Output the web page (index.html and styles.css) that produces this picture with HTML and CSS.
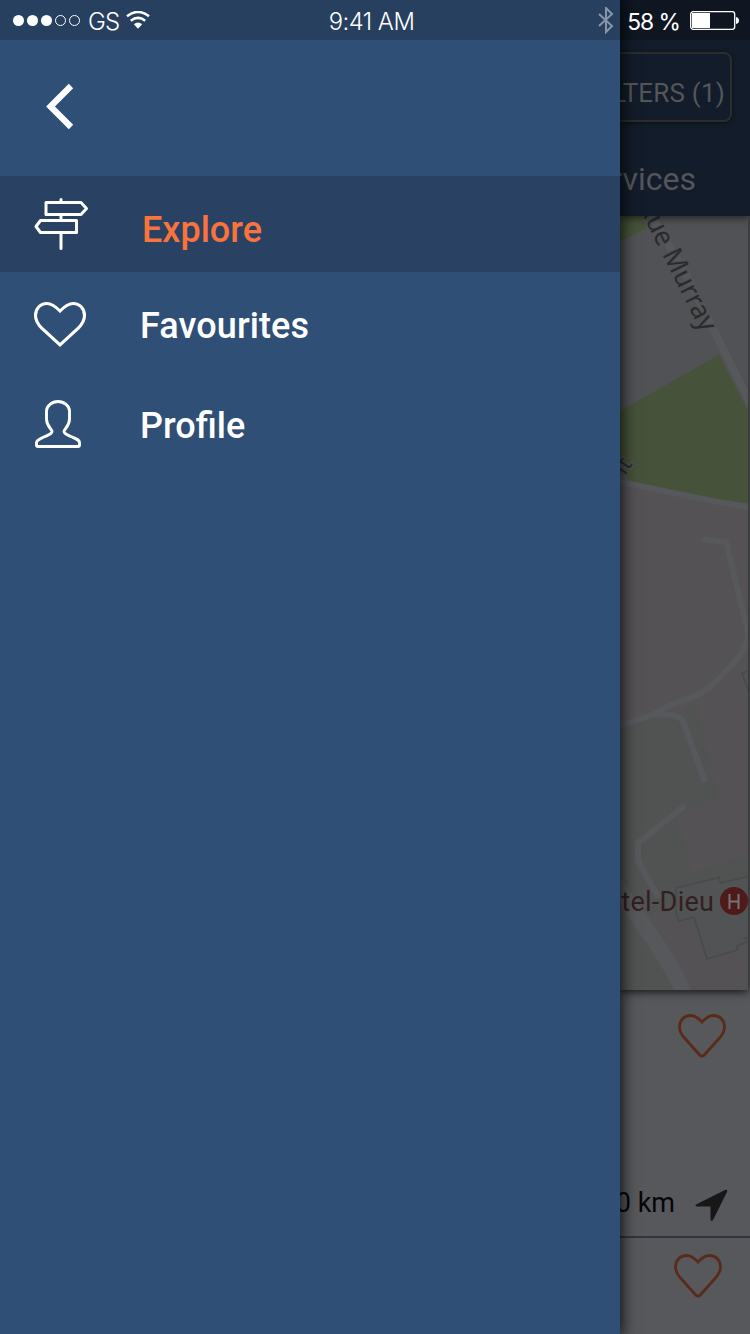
FILE: index.html
```html
<!DOCTYPE html>
<html lang="en">
<head>
<meta charset="utf-8">
<title>Explore</title>
<link rel="stylesheet" href="styles.css">
</head>
<body>
<div class="screen">
  <nav class="drawer">
    <div class="drawer-top">
      <svg class="back" width="32" height="48" viewBox="44 82 32 48"><path d="M71 86 50.500 106.500 71 127" fill="none" stroke="#fff" stroke-width="6.200"/></svg>
    </div>
    <a class="item active">
      <svg class="icon" width="60" height="60" viewBox="30 195 60 60"><g fill="none" stroke="#fff" stroke-width="3" stroke-linejoin="round" stroke-linecap="round"><path d="M61 199.500V202M61 215v5M61 233v15.500M46 202.500h35l5.500 6-5.500 6H46zM76.500 220.500h-36l-4.500 6 4.500 6h36z"/></g></svg>
      <span>Explore</span>
    </a>
    <a class="item favourites">
      <svg class="icon" width="60" height="60" viewBox="30 295 60 60"><path d="M60 311C56.500 307.500 52.500 303.500 47 303.500c-7 0-11.500 5.500-11.500 12 0 5 2.200 8.500 6 12.500L60 345l18.500-17c3.800-4 6-7.500 6-12.500 0-6.500-4.500-12-11.500-12-5.500 0-9.500 4-13 7.500z" fill="none" stroke="#fff" stroke-width="3.100"/></svg>
      <span>Favourites</span>
    </a>
    <a class="item profile">
      <svg class="icon" width="60" height="60" viewBox="30 395 60 60"><path d="M52 431.500c0-2.500-5.500-5-5.500-12.500V411c0-5 5.500-9.500 11.500-9.500s11.500 4.500 11.500 9.500v8c0 7.500-5.500 10-5.500 12.500 0 2.300 3 3 7 5 5.500 2.500 8.500 3.500 8.500 6v2.500q0 1.500-1.500 1.500H38q-1.500 0-1.500-1.500v-2.500c0-2.500 3.500-3.500 8.500-6 4-2 7-2.700 7-5z" fill="none" stroke="#fff" stroke-width="2.900" stroke-linejoin="round"/></svg>
      <span>Profile</span>
    </a>
  </nav>

  <main class="page">
    <header class="header">
      <div class="filters"><span>FILTERS (1)</span></div>
      <div class="tab"><span>Services</span></div>
    </header>
    <div class="map">
      <svg width="128" height="774" viewBox="620 216 128 774">
        <rect x="620" y="216" width="128" height="774" fill="#515255"/>
        <path d="M620 216h32l-6 13-26 12z" fill="#46523a"/>
        <path d="M620 411 719 355 748 411V503Q710 500 631 482L620 466z" fill="#46523a"/>
        <path d="M620 484 748 507V990H620z" fill="#555256"/>
        <path d="M620 725 680 713 696 700 718 797 678 816 692 872 748 855V962L714 990H620z" fill="#515353"/>
        <path d="M650 915 672 902 681 921 699 918 708 958 748 940V968L712 990H694z" fill="#555256"/>
        <path d="M676 888 719 877.500 720.500 883 750 876V937l-5 1 2 4-10 4v4l-30 9-13-42-15 4-3-9z" fill="#515355" stroke="#484a4d" stroke-width="1.500"/>
        <path d="M750 671l-8 2 6 17" fill="none" stroke="#484a4d" stroke-width="1.500"/>
        <g fill="none" stroke="#56585c" stroke-width="6" stroke-linecap="round" stroke-linejoin="round">
          <path d="M652 216 690 282 750 403" stroke-width="8"/>
          <path d="M618 482C650 487 710 502 750 507"/>
          <path d="M705 539.500 726 542 748 632C748 650 738 658 716 682 697 700 680 699 663 709L653 715 618 726M653 715C665 714 678 714 683 721L704 779"/>
          <path d="M683 807 638 843V861L657 895"/>
          <path d="M616 886 653 938Q672 967 684 992" stroke-width="16"/>
        </g>
        <g class="map-label">
          <text transform="translate(638 206) rotate(63.500)" textLength="142" lengthAdjust="spacingAndGlyphs">Rue Murray</text>
          <text transform="translate(633 464) rotate(-55)" text-anchor="end" class="small-label">lt</text>
        </g>
        <text x="714" y="910.500" text-anchor="end" textLength="128" class="place">Hôtel-Dieu</text>
        <circle cx="734" cy="901" r="14" fill="#4e1b1a"/>
        <path d="M729.500 894v15M738.500 894v15M729.500 901.500h9" stroke="#777477" stroke-width="2" fill="none"/>
      </svg>
    </div>
    <section class="card">
      <svg class="heart" width="52" height="48" viewBox="0 0 52 48"><path d="M26 10C23 7 20 3.500 14.500 3.500 8 3.500 3.500 8.500 3.500 15c0 4.500 1.800 7.500 5 11L23.800 43q2.200 2.400 4.400 0L43.500 26c3.200-3.500 5-6.500 5-11 0-6.500-4.500-11.500-11-11.500C32 3.500 29 7 26 10z" fill="none" stroke="#5a2a1b" stroke-width="2.800"/></svg>
      <div class="distance"><span>0 km</span><svg width="34" height="34" viewBox="0 0 34 34"><path d="M1 15.500 30.500.800Q33 .500 32 3L18 31q-1.800 2-2.500-.5V17.500H2Q-.500 16.500 1 15.500z" fill="#171717"/></svg></div>
    </section>
    <section class="card second">
      <svg class="heart" width="52" height="48" viewBox="0 0 52 48"><path d="M26 10C23 7 20 3.500 14.500 3.500 8 3.500 3.500 8.500 3.500 15c0 4.500 1.800 7.500 5 11L23.800 43q2.200 2.400 4.400 0L43.500 26c3.200-3.500 5-6.500 5-11 0-6.500-4.500-11.500-11-11.500C32 3.500 29 7 26 10z" fill="none" stroke="#5a2a1b" stroke-width="2.800"/></svg>
    </section>
  </main>

  <div class="status">
    <div class="status-left">
      <svg width="68" height="14" viewBox="0 0 68 14"><g fill="#fff"><circle cx="5.500" cy="6.500" r="5.500"/><circle cx="19.500" cy="6.500" r="5.500"/><circle cx="33.500" cy="6.500" r="5.500"/></g><g fill="none" stroke="#fff"><circle cx="47.500" cy="6.500" r="5"/><circle cx="61.500" cy="6.500" r="5"/></g></svg>
      <span class="carrier">GS</span>
      <svg width="24" height="20" viewBox="0 0 24 20"><g fill="none" stroke="#fff" stroke-width="2.600"><path d="M1 5.300Q12-3.300 23 5.300M4.800 9.700Q12 4.200 19.200 9.700"/></g><path d="M7.800 13.200Q12 10 16.200 13.200L12 17.800z" fill="#fff"/></svg>
    </div>
    <span class="time">9:41 AM</span>
    <div class="status-right">
      <svg width="16" height="28" viewBox="0 0 16 28"><path d="M1 7 14 19 8 25V1L14 7 1 19" fill="none" stroke="#8794a9" stroke-width="2"/></svg>
      <span class="percent">58 %</span>
      <svg width="50" height="20" viewBox="0 0 50 20"><rect x=".7" y=".7" width="44" height="17.600" rx="2.500" fill="none" stroke="#fff" stroke-width="1.300"/><path d="M2 2h18v15H2zM46 6q3 .5 3 3.500T46 13z" fill="#fff"/></svg>
    </div>
  </div>
</div>
</body>
</html>
```
FILE: styles.css
```css
* { box-sizing: border-box; }
body { margin: 0; font-family: Roboto, "Noto Sans", sans-serif; }
.screen { position: relative; display: flex; width: 750px; height: 1334px; overflow: hidden; background: #57585c; }
svg { display: block; flex: none; }

/* Navigation drawer */
.drawer { position: relative; z-index: 2; flex: 0 0 620px; background: #304f76; box-shadow: 0 0 14px 3px rgba(0, 0, 0, .75); }
.drawer-top { height: 176px; padding: 82px 0 0 44px; }
.item { display: flex; align-items: flex-start; height: 96px; padding-left: 30px; color: #fff; font-size: 36px; font-weight: 500; line-height: 42px; }
.item .icon { margin-right: 50px; }
.active { padding-top: 19px; background: #294162; color: #f8743c; }
.active .icon { margin-right: 52px; }
.active span { padding-top: 14px; }
.favourites { height: 104px; padding-top: 23px; letter-spacing: .1px; }
.favourites span { padding-top: 10px; }
.profile { padding-top: 19px; }
.profile span { padding-top: 10px; }

/* Dimmed page behind the drawer */
.page { flex: 0 0 130px; display: flex; flex-direction: column; overflow: hidden; }
.header { position: relative; z-index: 1; height: 216px; padding-top: 52px; background: #131c2a; box-shadow: 0 2px 8px rgba(0, 0, 0, .6); color: #55565a; }
.filters { display: flex; align-items: center; justify-content: flex-end; width: 112px; height: 70px; padding: 12px 5px 0 0; border: 2px solid #2b2d2d; border-left: 0; border-radius: 0 8px 8px 0; font-size: 26px; letter-spacing: .2px; white-space: nowrap; box-shadow: 0 1px 4px rgba(0, 0, 0, .5); }
.tab { display: flex; justify-content: flex-end; width: 76px; margin-top: 38px; font-size: 32px; line-height: 38px; }
.map { width: 128px; height: 774px; box-shadow: 0 2px 8px rgba(0, 0, 0, .75); }
.map-label { fill: #2a2b2c; stroke: #515255; stroke-width: 3px; paint-order: stroke; font-family: "Noto Sans", sans-serif; font-size: 27px; }
.small-label { font-size: 23px; }
.place { fill: #341f20; font-size: 27px; }
.card { display: flex; flex-direction: column; align-items: flex-end; justify-content: space-between; height: 248px; padding: 22px 21px 13px 0; border-bottom: 2px solid #30363f; }
.card .heart { margin-right: 1px; }
.distance { display: flex; align-items: flex-start; gap: 20px; color: #060606; font-size: 27px; line-height: 28px; white-space: nowrap; }
.second { height: 96px; padding: 14px 25px 0 0; border: 0; }

/* Status bar overlay */
.status { position: absolute; z-index: 3; inset: 0 0 auto; display: grid; grid-template-columns: 1fr auto 1fr; align-items: center; height: 40px; padding: 0 10px 0 13px; background: rgba(0, 0, 0, .18); color: #fff; font: 300 24px/40px Inter, "Liberation Sans", sans-serif; white-space: nowrap; }
.status-left, .status-right { display: flex; align-items: center; }
.status-left { gap: 7px; }
.status-right { justify-content: flex-end; }
.carrier, .time, .percent { padding-top: 2px; letter-spacing: -.5px; }
.carrier { letter-spacing: -.8px; }
.time { margin-right: 10px; font-size: 23.8px; }
.percent { margin: 0 10px 0 13px; font-size: 22.8px; font-weight: 400; letter-spacing: -1px; }
```
